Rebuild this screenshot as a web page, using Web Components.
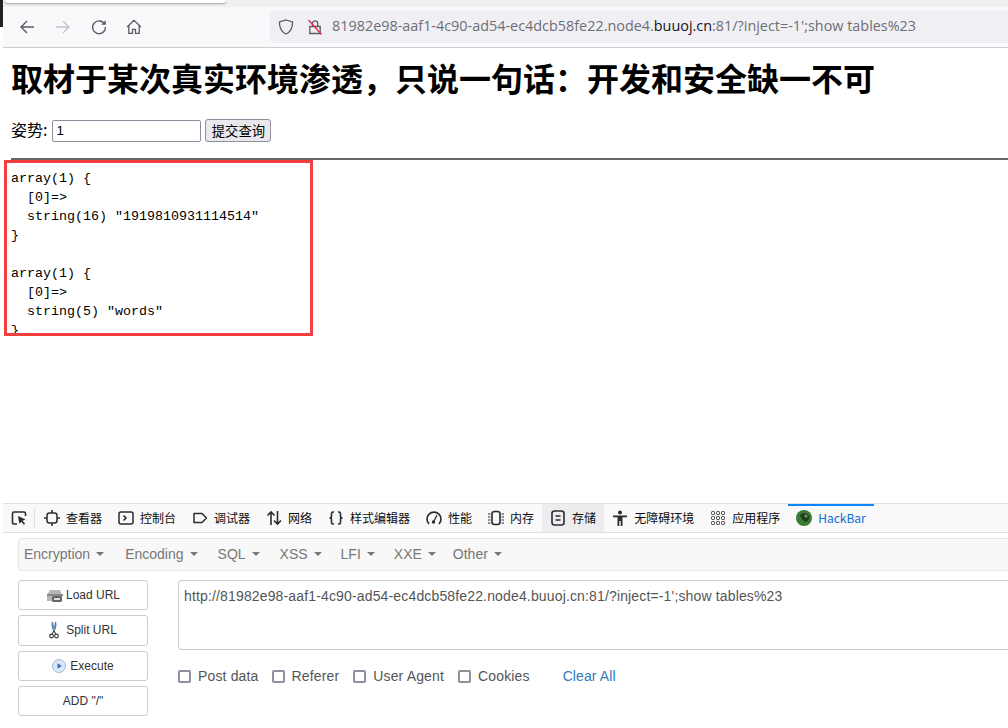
<!DOCTYPE html>
<html lang="zh">
<head>
<meta charset="utf-8">
<title>inject</title>
<style>
html, body { margin: 0; height: 100%; overflow: hidden; background: #fff; }
body { display: flex; flex-direction: column; height: 728px; font-family: "Liberation Sans", "Noto Sans CJK SC", sans-serif; }
dev-tools { margin-top: auto; }
</style>
</head>
<body>
<browser-bar url-host="81982e98-aaf1-4c90-ad54-ec4dcb58fe22.node4." url-domain="buuoj.cn" url-rest=":81/?inject=-1';show tables%23"></browser-bar>
<ctf-page></ctf-page>
<dev-tools></dev-tools>

<script>
const templateBar = document.createElement('template');
templateBar.innerHTML = `
	<style>
	:host{ display: block; background: #fff; flex: none; }
	#strip{ height: 7px; margin-left: 3px; background: #f0f0f0; position: relative; }
	#tab{ width: 221px; height: 3px; margin-left: 2px; background: #fff; border-radius: 0 0 4px 4px; box-shadow: 0 1px 2px rgba(0,0,0,.35); }
	#dark{ position: absolute; left: -3px; top: 0; width: 3px; height: 27px; background: #222; }
	#bar{ margin-left: 3px; height: 40px; background: #f9f9fb; border-bottom: 1px solid #ccc; display: flex; align-items: center; }
	#nav{ display: flex; align-items: center; width: 267px; flex: none; }
	#nav svg{ flex: none; }
	#url{ flex: 1; height: 32px; background: #f0f0f4; border-radius: 4px 0 0 4px; display: flex; align-items: center; padding-left: 8px; font: 14.4px "Open Sans", sans-serif; color: #6e6e76; white-space: nowrap; overflow: hidden; }
	#url b{ font-weight: 400; color: #15141a; }
	#text{ margin: 0 0 3px 9px; }
	</style>
	<div id="strip"><div id="dark"></div><div id="tab"></div></div>
	<div id="bar">
		<div id="nav">
			<svg style="margin-left:16px" width="16" height="16" viewBox="0 0 16 16" fill="none" stroke="#5b5b66" stroke-width="1.4"><path d="M15 8H2M8 2 2 8l6 6"/></svg>
			<svg style="margin-left:20px" width="16" height="16" viewBox="0 0 16 16" fill="none" stroke="#c4c4c9" stroke-width="1.4"><path d="M1 8h13M8 2l6 6-6 6"/></svg>
			<svg style="margin-left:20px" width="16" height="16" viewBox="0 0 16 16" fill="none" stroke="#5b5b66" stroke-width="1.4"><path d="M13.6 5.2A6.4 6.4 0 1 0 14.4 8"/><path d="M14.8 1.2v4.6h-4.6z" fill="#5b5b66" stroke="none"/></svg>
			<svg style="margin-left:19px" width="16" height="16" viewBox="0 0 16 16" fill="none" stroke="#5b5b66" stroke-width="1.3"><path d="M1 8 8 1.4 15 8M2.8 6.6V14.4h3.7v-4h3v4h3.7V6.6"/></svg>
		</div>
		<div id="url">
			<svg width="16" height="16" viewBox="0 0 16 16" fill="none" stroke="#5b5b66" stroke-width="1.3"><path d="M8 1 14.6 3c0 6-1.6 9.8-6.6 12C3 12.8 1.400 9 1.400 3z"/></svg>
			<svg style="margin-left:13px" width="16" height="16" viewBox="0 0 16 16" fill="none"><path d="M5.500 7V4.500a2.600 2.600 0 0 1 5.200 0V7M2.800 7.500h10.400V14.500H2.800z" stroke="#5b5b66" stroke-width="1.300"/><path d="M1.500 1 14.500 15.500" stroke="#e22850" stroke-width="1.300"/></svg>
			<span id="text"></span>
		</div>
	</div>
`;

class BrowserBar extends HTMLElement{
	constructor(){
		super();
		this.attachShadow({mode: 'open'});
		this.shadowRoot.appendChild(templateBar.content.cloneNode(true));
		const text = this.shadowRoot.querySelector('#text');
		const domain = document.createElement('b');
		domain.textContent = this.getAttribute('url-domain');
		text.append(this.getAttribute('url-host'), domain, this.getAttribute('url-rest'));
	}
}
window.customElements.define('browser-bar', BrowserBar);

const templatePage = document.createElement('template');
templatePage.innerHTML = `
	<style>
	:host{ display: block; flex: none; margin-left: 3px; color: #000; font-family: "Noto Sans CJK SC", "Liberation Sans", sans-serif; }
	h1{ margin: 11px 0 23px 8px; font-size: 32px; line-height: 37px; font-weight: 700; white-space: nowrap; }
	form{ margin: 0 0 16px 8px; height: 23px; display: flex; align-items: center; font-size: 16px; line-height: 21px; }
	label{ margin-bottom: 2px; }
	input{ box-sizing: border-box; width: 149px; height: 22px; margin: 0 4px 0 5px; padding: 1px 3px; border: 1px solid #8f8f9d; border-radius: 2px; font: 13.33px "Liberation Sans", sans-serif; }
	button{ box-sizing: border-box; width: 66px; height: 23px; padding: 0; border: 1px solid #8f8f9d; border-radius: 3px; background: #e9e9ed; font: 13.33px "Noto Sans CJK SC", sans-serif; }
	hr{ height: 2px; margin: 0 0 0 8px; border: 0; background: #666; }
	#result{ box-sizing: border-box; width: 309px; height: 176px; margin-left: 1px; border: 3px solid #f33f3f; overflow: hidden; padding: 6px 0 0 4px; }
	pre{ margin: 0; font: 13.33px/19px "Liberation Mono", monospace; }
	</style>
	<h1>取材于某次真实环境渗透&#xFF0C;只说一句话&#xFF1A;开发和安全缺一不可</h1>
	<form onsubmit="return false"><label>姿势:</label><input type="text" value="1"><button type="submit">提交查询</button></form>
	<hr>
	<div id="result"><pre>array(1) {
  [0]=&gt;
  string(16) "1919810931114514"
}

array(1) {
  [0]=&gt;
  string(5) "words"
}</pre></div>
`;

class CtfPage extends HTMLElement{
	constructor(){
		super();
		this.attachShadow({mode: 'open'});
		this.shadowRoot.appendChild(templatePage.content.cloneNode(true));
	}
}
window.customElements.define('ctf-page', CtfPage);

const templateTab = document.createElement('template');
templateTab.innerHTML = `
	<style>
	:host{ display: flex; align-items: center; gap: 6px; height: 28px; padding: 0 8px; font: 12px "Noto Sans CJK SC", sans-serif; color: #0c0c0d; white-space: nowrap; flex: none; }
	:host([selected]){ background: #ededf0; }
	:host([current]){ color: #0a6fd6; box-shadow: inset 0 2px 0 #0a84ff; }
	span{ margin-bottom: 2px; }
	</style>
	<slot name="icon"></slot><span><slot></slot></span>
`;

class DevTab extends HTMLElement{
	constructor(){
		super();
		this.attachShadow({mode: 'open'});
		this.shadowRoot.appendChild(templateTab.content.cloneNode(true));
	}
}
window.customElements.define('dev-tab', DevTab);

const templateMenu = document.createElement('template');
templateMenu.innerHTML = `
	<style>
	:host{ display: inline-flex; align-items: center; gap: 6px; color: #777; font: 14px "Liberation Sans", sans-serif; flex: none; }
	i{ width: 0; height: 0; border-top: 4px solid #777; border-left: 4px solid transparent; border-right: 4px solid transparent; }
	</style>
	<slot></slot><i></i>
`;

class HackMenu extends HTMLElement{
	constructor(){
		super();
		this.attachShadow({mode: 'open'});
		this.shadowRoot.appendChild(templateMenu.content.cloneNode(true));
	}
}
window.customElements.define('hack-menu', HackMenu);

const templateBtn = document.createElement('template');
templateBtn.innerHTML = `
	<style>
	:host{ box-sizing: border-box; display: flex; align-items: center; justify-content: center; gap: 2px; height: 30px; border: 1px solid #ccc; border-radius: 3px; background: #fff; color: #333; font: 12px "Liberation Sans", sans-serif; padding-bottom: 1px; }
	</style>
	<slot name="icon"></slot><slot></slot>
`;

class HackButton extends HTMLElement{
	constructor(){
		super();
		this.attachShadow({mode: 'open'});
		this.shadowRoot.appendChild(templateBtn.content.cloneNode(true));
	}
}
window.customElements.define('hack-button', HackButton);

const templateCheck = document.createElement('template');
templateCheck.innerHTML = `
	<style>
	:host{ display: inline-flex; align-items: center; gap: 7px; color: #555; font: 14px "Liberation Sans", sans-serif; letter-spacing: .15px; flex: none; }
	i{ box-sizing: border-box; width: 13px; height: 13px; border: 2px solid #8f8f9d; border-radius: 2px; background: #fff; }
	</style>
	<i></i><slot></slot>
`;

class HackCheck extends HTMLElement{
	constructor(){
		super();
		this.attachShadow({mode: 'open'});
		this.shadowRoot.appendChild(templateCheck.content.cloneNode(true));
	}
}
window.customElements.define('hack-check', HackCheck);

const templateDev = document.createElement('template');
templateDev.innerHTML = `
	<style>
	:host{ display: block; flex: none; height: 225px; margin-left: 3px; background: #fff; overflow: hidden; }
	#tabs{ display: flex; align-items: stretch; height: 28px; background: #f9f9fa; border-top: 1px solid #e0e0e2; border-bottom: 1px solid #e0e0e2; }
	#pick{ width: 31px; display: flex; align-items: center; padding-left: 8px; box-sizing: border-box; flex: none; }
	#sep{ width: 1px; height: 20px; margin: 4px 2px 0 0; background: #e0e0e2; flex: none; }
	#tabs dev-tab:first-of-type{ margin-left: -1px; }
	#panel{ padding: 5px 0 0 15px; }
	#menu{ box-sizing: border-box; height: 33px; display: flex; align-items: center; padding: 0 0 1px 5px; background: #f8f8f8; border: 1px solid #e7e7e7; border-right: 0; border-radius: 4px 0 0 4px; }
	#menu hack-menu{ margin-right: 20px; }
	#main{ display: flex; margin-top: 9px; }
	#btns{ width: 130px; flex: none; display: flex; flex-direction: column; gap: 5px; margin-right: 30px; }
	#side{ flex: 1; min-width: 0; }
	textarea{ display: block; box-sizing: border-box; width: 100%; height: 70px; padding: 5px 5px; resize: none; overflow: hidden; border: 1px solid #ccc; border-right: 0; border-radius: 4px 0 0 4px; color: #555; font: 14px/20px "Liberation Sans", sans-serif; letter-spacing: .15px; outline: 0; }
	#checks{ display: flex; align-items: center; height: 14px; margin-top: 19px; }
	#checks hack-check{ margin-right: 14px; }
	a{ margin-left: 19px; color: #337ab7; font-size: 14px; letter-spacing: .1px; text-decoration: none; }
	</style>
	<div id="tabs">
		<div id="pick"><svg width="16" height="16" viewBox="0 0 16 16" fill="none"><path d="M6 14H3a1.500 1.500 0 0 1-1.500-1.500v-9A1.500 1.500 0 0 1 3 2h10a1.500 1.500 0 0 1 1.500 1.500V6" stroke="#2b2b30" stroke-width="1.600"/><path d="M7 6l7.500 3.600-3 1.100 2.600 3-1.200 1-2.600-3-2 2z" fill="#2b2b30"/></svg></div>
		<div id="sep"></div>
		<dev-tab><svg slot="icon" width="16" height="16" viewBox="0 0 16 16" fill="none" stroke="#2b2b30" stroke-width="1.500"><rect x="3" y="3" width="10" height="10" rx="2.500"/><path d="M8 0v3M8 13v3M0 8h3M13 8h3"/></svg>查看器</dev-tab>
		<dev-tab><svg slot="icon" width="16" height="16" viewBox="0 0 16 16" fill="none" stroke="#2b2b30" stroke-width="1.500"><rect x="1" y="2" width="14" height="12" rx="2"/><path d="M5.500 5.500 8 8l-2.500 2.500"/></svg>控制台</dev-tab>
		<dev-tab><svg slot="icon" width="16" height="16" viewBox="0 0 16 16" fill="none" stroke="#2b2b30" stroke-width="1.500"><path d="M2 3.500h8l4.500 4.500-4.500 4.500H2z" stroke-linejoin="round"/></svg>调试器</dev-tab>
		<dev-tab><svg slot="icon" width="16" height="16" viewBox="0 0 16 16" fill="none" stroke="#2b2b30" stroke-width="1.600"><path d="M5 15V2M1.500 5.500 5 2l3.500 3.500M11.500 1v13M8 10.500 11.500 14l3.500-3.500"/></svg>网络</dev-tab>
		<dev-tab><svg slot="icon" width="16" height="16" viewBox="0 0 16 16" fill="none" stroke="#2b2b30" stroke-width="1.600"><path d="M6 2H5C3.800 2 3.500 3 3.500 4v2.500C3.500 7.500 3 8 1.500 8c1.500 0 2 .5 2 1.500V12c0 1 .3 2 1.500 2h1M10 2h1c1.200 0 1.500 1 1.500 2v2.500c0 1 .5 1.500 2 1.500-1.500 0-2 .5-2 1.500V12c0 1-.3 2-1.500 2h-1"/></svg>样式编辑器</dev-tab>
		<dev-tab><svg slot="icon" width="16" height="16" viewBox="0 0 16 16" fill="none" stroke="#2b2b30" stroke-width="1.600"><path d="M3 14A7 7 0 1 1 13 14"/><path d="M11 5 8 11" stroke-width="1.300"/><circle cx="7.500" cy="12" r="1.700" fill="#2b2b30" stroke="none"/></svg>性能</dev-tab>
		<dev-tab><svg slot="icon" width="16" height="16" viewBox="0 0 16 16" fill="none" stroke="#2b2b30" stroke-width="1.400"><rect x="4" y="1.500" width="8" height="13" rx="2.500" stroke-width="1.600"/><path d="M0 4h2.500M0 7h2.500M0 10h2.500M0 13h2.500M13.500 4H16M13.500 7H16M13.500 10H16M13.500 13H16" stroke-width="1"/></svg>内存</dev-tab>
		<dev-tab selected><svg slot="icon" width="16" height="16" viewBox="0 0 16 16" fill="none" stroke="#2b2b30" stroke-width="1.600"><rect x="2" y="1" width="12" height="14" rx="2.500"/><path d="M5.500 6h5M5.500 10h5"/></svg>存储</dev-tab>
		<dev-tab><svg slot="icon" width="16" height="16" viewBox="0 0 16 16" fill="#2b2b30"><circle cx="8" cy="2.500" r="2"/><path d="M1 5.500h14v1.800h-4.500V16H8.700v-5H7.300v5H5.500V7.300H1z"/></svg>无障碍环境</dev-tab>
		<dev-tab><svg slot="icon" width="16" height="16" viewBox="0 0 16 16" fill="none" stroke="#2b2b30" stroke-width="1"><rect x="1.500" y="1.500" width="3" height="3" rx="1"/><rect x="6.500" y="1.500" width="3" height="3" rx="1"/><rect x="11.500" y="1.500" width="3" height="3" rx="1"/><rect x="1.500" y="6.500" width="3" height="3" rx="1"/><rect x="6.500" y="6.500" width="3" height="3" rx="1"/><rect x="11.500" y="6.500" width="3" height="3" rx="1"/><rect x="1.500" y="11.500" width="3" height="3" rx="1"/><rect x="6.500" y="11.500" width="3" height="3" rx="1"/><rect x="11.500" y="11.500" width="3" height="3" rx="1"/></svg>应用程序</dev-tab>
		<dev-tab current><svg slot="icon" width="16" height="16" viewBox="0 0 16 16"><circle cx="8" cy="8" r="8" fill="#3c7a35"/><path d="M4 5c3-3 8-2 9 1 1 3-2 6-4 6-1-2-4-3-5-7z" fill="#1f3d1c"/><circle cx="10" cy="6" r="1.500" fill="#6aa35f"/></svg>HackBar</dev-tab>
	</div>
	<div id="panel">
		<div id="menu">
			<hack-menu style="margin-right:21px">Encryption</hack-menu>
			<hack-menu>Encoding</hack-menu>
			<hack-menu>SQL</hack-menu>
			<hack-menu style="margin-right:19px">XSS</hack-menu>
			<hack-menu style="margin-right:19px">LFI</hack-menu>
			<hack-menu style="margin-right:17px">XXE</hack-menu>
			<hack-menu>Other</hack-menu>
		</div>
		<div id="main">
			<div id="btns">
				<hack-button><svg slot="icon" width="18" height="16" viewBox="0 0 18 16"><path d="M4 3h10l2 5v6H1V8z" fill="#b5b5b5"/><rect x="1" y="7" width="16" height="2" fill="#8a8a8a"/><rect x="6" y="9" width="10" height="6" rx="1.500" fill="#666"/><rect x="8" y="11" width="6" height="2" fill="#ddd"/></svg>Load URL</hack-button>
				<hack-button style="height:31px;gap:7px"><svg slot="icon" width="10" height="18" viewBox="0 0 10 18" fill="none" stroke="#3a3a3a" stroke-width="1.100"><path d="M3.500 1c-1 3-.5 6 1.500 9 2-3 2.500-6 1.500-9-.5 3-.5 5-1.500 6.500C4 6 4 4 3.500 1z" stroke="#5b7fa8"/><path d="M5 10 3 13M5 10l2 3"/><circle cx="2.500" cy="15" r="1.900"/><circle cx="7.500" cy="15" r="1.900"/></svg>Split URL</hack-button>
				<hack-button style="gap:4px"><svg slot="icon" width="14" height="14" viewBox="0 0 14 14"><circle cx="7" cy="7" r="6.500" fill="#dbe7f6" stroke="#9db9dc"/><path d="M5.500 4.200 9.800 7l-4.300 2.800z" fill="#2f6fb5"/></svg>Execute</hack-button>
				<hack-button>ADD "/"</hack-button>
			</div>
			<div id="side">
				<textarea spellcheck="false">http://81982e98-aaf1-4c90-ad54-ec4dcb58fe22.node4.buuoj.cn:81/?inject=-1';show tables%23</textarea>
				<div id="checks">
					<hack-check style="margin-right:13px">Post data</hack-check>
					<hack-check>Referer</hack-check>
					<hack-check>User Agent</hack-check>
					<hack-check>Cookies</hack-check>
					<a href="#">Clear All</a>
				</div>
			</div>
		</div>
	</div>
`;

class DevTools extends HTMLElement{
	constructor(){
		super();
		this.attachShadow({mode: 'open'});
		this.shadowRoot.appendChild(templateDev.content.cloneNode(true));
	}
}
window.customElements.define('dev-tools', DevTools);
</script>
</body>
</html>
